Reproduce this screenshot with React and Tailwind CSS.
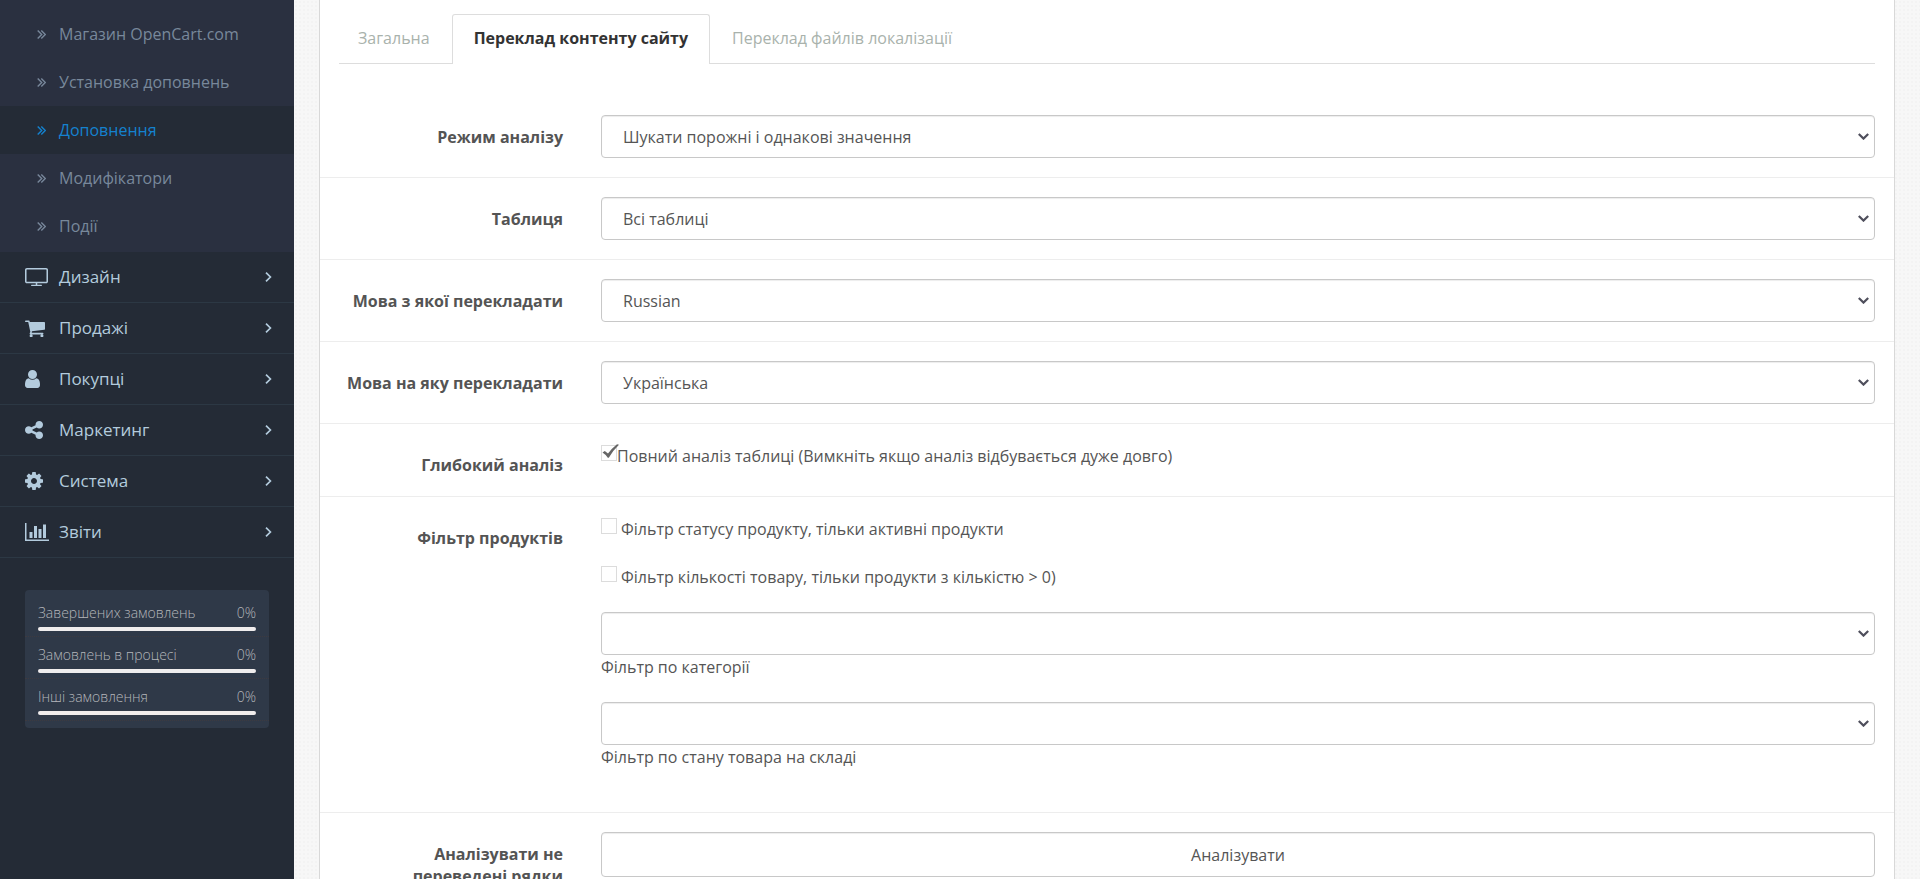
import { useState } from "react";

const SUB_ITEMS = [
  { label: "Магазин OpenCart.com" },
  { label: "Установка доповнень" },
  { label: "Доповнення", active: true },
  { label: "Модифікатори" },
  { label: "Події" },
];

const MENU = [
  {
    label: "Дизайн",
    box: "0 0 1920 1536",
    size: "w-[23px]",
    d: "M1792 1120v-960q0-13-9.5-22.5t-22.5-9.5h-1600q-13 0-22.5 9.5t-9.5 22.5v960q0 13 9.5 22.5t22.5 9.5h1600q13 0 22.5-9.5t9.5-22.5zm128-960v960q0 66-47 113t-113 47h-736v128h352q14 0 23 9t9 23v64q0 14-9 23t-23 9h-832q-14 0-23-9t-9-23v-64q0-14 9-23t23-9h352v-128h-736q-66 0-113-47t-47-113v-960q0-66 47-113t113-47h1600q66 0 113 47t47 113z",
  },
  {
    label: "Продажі",
    box: "0 128 1664 1536",
    size: "w-5",
    d: "M640 1536q0 52-38 90t-90 38-90-38-38-90 38-90 90-38 90 38 38 90zm896 0q0 52-38 90t-90 38-90-38-38-90 38-90 90-38 90 38 38 90zm128-1088v512q0 24-16.5 42.5t-40.5 21.5l-1044 122q13 60 13 70 0 16-24 64h920q26 0 45 19t19 45-19 45-45 19h-1024q-26 0-45-19t-19-45q0-11 8-31.5t16-36 21.5-40 15.5-29.5l-177-823h-204q-26 0-45-19t-19-45 19-45 45-19h256q16 0 28.5 6.5t19.5 15.5 13 24.5 8 26 5.5 29.5 4.5 26h1201q26 0 45 19t19 45z",
  },
  {
    label: "Покупці",
    box: "256 128 1280 1536",
    size: "w-[15px]",
    d: "M1536 1399q0 109-62.5 187t-150.5 78h-854q-88 0-150.5-78t-62.5-187q0-85 8.5-160.5t31.5-152 58.5-131 94-89 134.5-34.5q131 128 313 128t313-128q76 0 134.5 34.5t94 89 58.5 131 31.5 152 8.5 160.5zm-256-887q0 159-112.5 271.5t-271.5 112.5-271.5-112.5-112.5-271.5 112.5-271.5 271.5-112.5 271.5 112.5 112.5 271.5z",
  },
  {
    label: "Маркетинг",
    box: "128 128 1536 1536",
    size: "w-[18px]",
    d: "M1344 1024q133 0 226.5 93.5t93.5 226.5-93.5 226.5-226.5 93.5-226.5-93.5-93.5-226.5q0-12 2-34l-360-180q-92 86-218 86-133 0-226.5-93.5t-93.5-226.5 93.5-226.5 226.5-93.5q126 0 218 86l360-180q-2-22-2-34 0-133 93.5-226.5t226.5-93.5 226.5 93.5 93.5 226.5-93.5 226.5-226.5 93.5q-126 0-218-86l-360 180q2 22 2 34t-2 34l360 180q92-86 218-86z",
  },
  {
    label: "Система",
    box: "128 128 1536 1536",
    size: "w-[18px]",
    d: "M1152 896q0-106-75-181t-181-75-181 75-75 181 75 181 181 75 181-75 75-181zm512-109v222q0 12-8 23t-20 13l-185 28q-19 54-39 91 35 50 107 138 10 12 10 25t-9 23q-27 37-99 108t-94 71q-12 0-26-9l-138-108q-44 23-91 38-16 136-29 186-7 28-36 28h-222q-14 0-24.5-8.5t-11.5-21.5l-28-184q-49-16-90-37l-141 107q-10 9-25 9-14 0-25-11-126-114-165-168-7-10-7-23 0-12 8-23 15-21 51-66.5t54-70.5q-27-50-41-99l-183-27q-13-2-21-12.5t-8-23.5v-222q0-12 8-23t19-13l186-28q14-46 39-92-40-57-107-138-10-12-10-24 0-10 9-23 26-36 98.5-107.5t94.5-71.5q13 0 26 10l138 107q44-23 91-38 16-136 29-186 7-28 36-28h222q14 0 24.5 8.5t11.5 21.5l28 184q49 16 90 37l142-107q9-9 24-9 13 0 25 10 129 119 165 170 7 8 7 22 0 12-8 23-15 21-51 66.5t-54 70.5q26 50 41 98l183 28q13 2 21 12.5t8 23.5z",
  },
  {
    label: "Звіти",
    box: "0 0 2048 1536",
    size: "w-6",
    d: "M640 768v512h-256v-512h256zm384-512v1024h-256v-1024h256zm1024 1152v128h-2048v-1536h128v1408h1920zm-640-896v768h-256v-768h256zm384-384v1152h-256v-1152h256z",
  },
];

const STATS = ["Завершених замовлень", "Замовлень в процесі", "Інші замовлення"];

function Sidebar() {
  return (
    <nav className="w-[294px] shrink-0 bg-[#242b36]">
      <ul className="bg-[#2a3040] pt-[10px] pb-[2px]">
        {SUB_ITEMS.map(({ label, active }) => (
          <li key={label}>
            <a
              href="#"
              className={
                active
                  ? "flex h-12 items-center gap-[13px] bg-[#242b36] pl-[37px] text-base text-[#1482cf]"
                  : "flex h-12 items-center gap-[13px] pl-[37px] text-base text-[#78889b]"
              }
            >
              <svg viewBox="0 0 9 9" className="w-[9px]" fill="none" stroke="currentColor" strokeWidth="1.4">
                <path d="M.7.5l4 4-4 4M4.3.5l4 4-4 4" />
              </svg>
              {label}
            </a>
          </li>
        ))}
      </ul>
      <ul>
        {MENU.map(({ label, box, size, d }) => (
          <li key={label} className="border-b border-[#2c3844]">
            <a href="#" className="flex h-[50px] items-center pr-[22px] pl-[25px] text-[17px] text-[#b3cbdd]">
              <span className="flex w-[34px]">
                <svg viewBox={box} className={size} fill="currentColor">
                  <path d={d} />
                </svg>
              </span>
              <span className="flex-1">{label}</span>
              <svg viewBox="0 0 7 10" className="w-[7px]" fill="none" stroke="currentColor" strokeWidth="1.7">
                <path d="M1 .7l4.400 4.300L1 9.300" />
              </svg>
            </a>
          </li>
        ))}
      </ul>
      <ul className="mx-[25px] mt-8 rounded bg-[#2f3948] pt-[5px] pb-[7px]">
        {STATS.map((label) => (
          <li
            key={label}
            className="flex h-[42px] flex-col justify-end gap-1 border-b border-dotted border-[#3d3a40] px-[13px] pb-[5px] text-sm font-light text-[#b4b6ba]"
          >
            <div className="flex justify-between">
              <span>{label}</span>
              <span>0%</span>
            </div>
            <div className="h-1 rounded-sm bg-[#f0eded]" />
          </li>
        ))}
      </ul>
    </nav>
  );
}

function Row({ label, htmlFor, last, children }) {
  return (
    <div
      className={
        last
          ? "flex px-[19px] pt-[19px]"
          : "flex border-b border-[#ededed] px-[19px] py-[19px]"
      }
    >
      <div className="w-[262px] shrink-0 pt-[11px] pr-[38px] pb-px text-right leading-[22px] font-bold text-[#545454]">
        <label htmlFor={htmlFor}>{label}</label>
      </div>
      <div className="min-w-0 flex-1">{children}</div>
    </div>
  );
}

function Select({ id, value }) {
  return (
    <div className="relative">
      <select
        id={id}
        className="block h-[43px] w-full appearance-none rounded-[4px] border border-[#c8c8c8] bg-white pt-px pr-8 pl-[21px] text-base text-[#555] shadow-[inset_0_1px_1px_rgba(0,0,0,0.075)]"
      >
        <option>{value}</option>
      </select>
      <svg
        viewBox="0 0 11 7"
        className="pointer-events-none absolute top-[18px] right-[6px] w-[11px]"
        fill="none"
        stroke="#4f4f5c"
        strokeWidth="2.2"
      >
        <path d="M.8 1l4.700 4.600L10.200 1" />
      </svg>
    </div>
  );
}

function Check({ id, label, initial, tight }) {
  const [on, setOn] = useState(Boolean(initial));
  return (
    <label htmlFor={id} className={tight ? "flex pt-px" : "flex gap-1 pt-px"}>
      <span className="relative mt-px flex size-4 shrink-0">
        <input
          id={id}
          type="checkbox"
          checked={on}
          onChange={() => setOn(!on)}
          className="size-4 appearance-none border border-[#dcdcdc] bg-white"
        />
        {on && (
          <svg
            viewBox="0 0 18 16"
            className="pointer-events-none absolute -top-px left-0 w-[18px]"
            fill="#666"
          >
            <path d="M1.500 8.600L3.800 6.900L7 9.600Q10.500 4.500 16 .2L18 .8Q12 6.500 7.800 13.700H6.800Q4.500 10.500 1.500 8.600z" />
          </svg>
        )}
      </span>
      <span>{label}</span>
    </label>
  );
}

export default function App() {
  return (
    <div className="flex h-screen overflow-hidden bg-[#f7f7f7] font-['Open_Sans','Noto_Sans',sans-serif] text-base text-[#555]">
      <Sidebar />
      <main className="min-w-0 flex-1 bg-[radial-gradient(#f3f3f3_1px,transparent_1px)] bg-[size:4px_4px] pr-[25px] pl-[25px]">
        <div className="min-h-full border-x border-[#d8d8d8] bg-white">
          <div className="px-[19px] pt-[14px]">
            <div role="tablist" className="flex border-b border-[#ddd] leading-[22px]">
              <button role="tab" className="pr-[22px] pb-[2px] pl-[19px] text-[#a9b2ac]">
                Загальна
              </button>
              <button
                role="tab"
                aria-selected="true"
                className="-mb-px rounded-t-[3px] border border-b-0 border-[#ddd] bg-white px-[21px] pt-3 pb-[15px] font-bold text-[#333]"
              >
                Переклад контенту сайту
              </button>
              <button role="tab" className="px-[22px] pb-[2px] text-[#a9b2ac]">
                Переклад файлів локалізації
              </button>
            </div>
          </div>
          <form className="pt-8">
            <Row label="Режим аналізу" htmlFor="mode">
              <Select id="mode" value="Шукати порожні і однакові значення" />
            </Row>
            <Row label="Таблиця" htmlFor="table">
              <Select id="table" value="Всі таблиці" />
            </Row>
            <Row label="Мова з якої перекладати" htmlFor="from">
              <Select id="from" value="Russian" />
            </Row>
            <Row label="Мова на яку перекладати" htmlFor="to">
              <Select id="to" value="Українська" />
            </Row>
            <Row label="Глибокий аналіз" htmlFor="deep">
              <Check id="deep" label="Повний аналіз таблиці (Вимкніть якщо аналіз відбувається дуже довго)" initial tight />
            </Row>
            <Row label="Фільтр продуктів" htmlFor="status">
              <div className="flex flex-col gap-[23px] pb-6">
                <Check id="status" label="Фільтр статусу продукту, тільки активні продукти" />
                <Check id="quantity" label="Фільтр кількості товару, тільки продукти з кількістю > 0)" />
                <div>
                  <Select id="category" value="" />
                  <label htmlFor="category" className="block">Фільтр по категорії</label>
                </div>
                <div>
                  <Select id="stock" value="" />
                  <label htmlFor="stock" className="block">Фільтр по стану товара на складі</label>
                </div>
              </div>
            </Row>
            <Row label="Аналізувати не переведені рядки" htmlFor="analyze" last>
              <button
                id="analyze"
                type="button"
                className="block h-[45px] w-full rounded-[4px] border border-[#c8c8c8] bg-white shadow-[inset_0_1px_1px_rgba(0,0,0,0.075)]"
              >
                Аналізувати
              </button>
            </Row>
          </form>
        </div>
      </main>
    </div>
  );
}
